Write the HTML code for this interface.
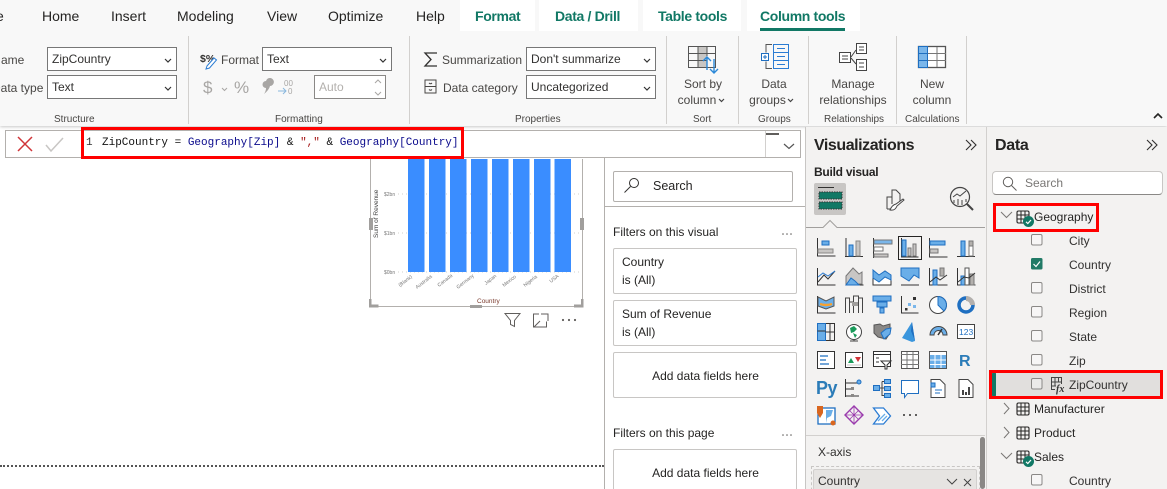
<!DOCTYPE html>
<html><head><meta charset="utf-8"><style>
*{box-sizing:border-box}
html{margin:0;padding:0;width:1167px;height:489px;overflow:hidden}
body{margin:0;padding:0;width:1167px;height:489px;position:relative;overflow:hidden;background:#fff;font-family:"Liberation Sans",sans-serif;color:#252423}
.t{position:absolute;white-space:nowrap;font-size:12px;line-height:16px}
.b{position:absolute}
.tab{font-size:14px;top:8px;line-height:17px;color:#252423}
.tg{font-size:14px;top:8px;line-height:17px;color:#117865;font-weight:bold;letter-spacing:-.35px}
.inp{position:absolute;background:#fff;border:1px solid #777;height:24px;font-size:12px;line-height:23px;padding-left:4px;white-space:nowrap;color:#323130}
.gl{position:absolute;top:113px;font-size:10px;line-height:13px;color:#484644;white-space:nowrap;text-align:center}
.sep{position:absolute;top:36px;height:88px;width:1px;background:#d2d0ce}
.rt{position:absolute;font-size:12px;line-height:16px;color:#484644;text-align:center;white-space:nowrap}
.card{position:absolute;left:613px;width:184px;height:46px;border:1px solid #c8c6c4;border-radius:2px;background:#fff;font-size:12px;line-height:18px;padding:4px 8px}
.add{text-align:center;line-height:46px;padding:0;padding-left:1px}
.f{position:absolute;left:1069px;font-size:12px;line-height:16px;color:#323130;white-space:nowrap}
.g{position:absolute;left:1034px;font-size:12px;line-height:16px;color:#252423;white-space:nowrap}
.red{position:absolute;border:3px solid #f00}
</style></head><body>

<!-- ribbon -->
<div class="b" style="left:0;top:0;width:1167px;height:126px;background:#f8f8f8;box-shadow:0 1px 3px rgba(0,0,0,.22)"></div>
<div class="b" style="left:460px;top:0;width:75px;height:31px;background:#fff"></div>
<div class="b" style="left:539px;top:0;width:99px;height:31px;background:#fff"></div>
<div class="b" style="left:643px;top:0;width:98px;height:31px;background:#fff"></div>
<div class="b" style="left:747px;top:0;width:113px;height:31px;background:#fff"></div>
<div class="b" style="left:760px;top:28px;width:85px;height:3px;background:#117865"></div>
<span class="t tab" style="left:-4px;top:8px">e</span>
<span class="t tab" style="left:42px">Home</span>
<span class="t tab" style="left:111px">Insert</span>
<span class="t tab" style="left:177px">Modeling</span>
<span class="t tab" style="left:267px">View</span>
<span class="t tab" style="left:328px">Optimize</span>
<span class="t tab" style="left:416px">Help</span>
<span class="t tg" style="left:475px">Format</span>
<span class="t tg" style="left:555px">Data / Drill</span>
<span class="t tg" style="left:658px">Table tools</span>
<span class="t tg" style="left:760px">Column tools</span>

<div class="sep" style="left:188px"></div><div class="sep" style="left:409px"></div><div class="sep" style="left:666px"></div><div class="sep" style="left:738px"></div><div class="sep" style="left:808px"></div><div class="sep" style="left:896px"></div><div class="sep" style="left:966px"></div>

<span class="t" style="left:1px;top:52px;color:#484644">ame</span>
<span class="t" style="left:-8px;top:80px;color:#484644">Data type</span>
<div class="inp" style="left:47px;top:47px;width:130px">ZipCountry</div>
<div class="inp" style="left:47px;top:75px;width:130px">Text</div>
<span class="t" style="left:221px;top:52px;color:#484644">Format</span>
<div class="inp" style="left:262px;top:47px;width:130px">Text</div>
<div class="inp" style="left:314px;top:75px;width:72px;color:#b3b0ad;border-color:#8a8886">Auto</div>
<span class="t" style="left:442px;top:52px;color:#484644">Summarization</span>
<span class="t" style="left:443px;top:80px;color:#484644">Data category</span>
<div class="inp" style="left:526px;top:47px;width:130px">Don't summarize</div>
<div class="inp" style="left:526px;top:75px;width:130px">Uncategorized</div>
<div class="rt" style="left:679px;top:76px;width:48px">Sort by</div>
<div class="rt" style="left:672px;top:92px;width:50px">column</div>
<div class="rt" style="left:750px;top:76px;width:48px">Data</div>
<div class="rt" style="left:749px;top:92px;width:37px">groups</div>
<div class="rt" style="left:823px;top:76px;width:60px">Manage</div>
<div class="rt" style="left:815px;top:92px;width:76px">relationships</div>
<div class="rt" style="left:912px;top:76px;width:40px">New</div>
<div class="rt" style="left:911px;top:92px;width:42px">column</div>
<div class="gl" style="left:54px">Structure</div>
<div class="gl" style="left:275px">Formatting</div>
<div class="gl" style="left:515px">Properties</div>
<div class="gl" style="left:693px">Sort</div>
<div class="gl" style="left:758px">Groups</div>
<div class="gl" style="left:824px">Relationships</div>
<div class="gl" style="left:905px">Calculations</div>

<!-- formula bar -->
<div class="b" style="left:5px;top:130px;width:796px;height:28px;border:1px solid #b3b0ad;background:#fff"></div>
<div class="b" style="left:765px;top:131px;width:1px;height:26px;background:#d2d0ce"></div>
<div class="b" style="left:766px;top:133px;width:13px;height:2px;background:#605e5c"></div>
<div class="t" style="left:86px;top:136px;font:11px/15px 'Liberation Mono',monospace;color:#333">1</div>
<div class="t" style="left:102px;top:136px;font:11px/15px 'Liberation Mono',monospace;color:#111;white-space:pre">ZipCountry = <span style="color:#0a0a8c">Geography[Zip]</span> &amp; <span style="color:#a31515">","</span> &amp; <span style="color:#0a0a8c">Geography[Country]</span></div>

<!-- canvas -->
<div class="b" style="left:604px;top:158px;width:1px;height:331px;background:#b3b0ad"></div>
<div class="b" style="left:0;top:465px;width:604px;height:0;border-top:2px dotted #555"></div>

<!-- chart and all vector icons -->
<svg class="b" style="left:0;top:0" width="1167" height="489" viewBox="0 0 1167 489" fill="none">
<text x="200" y="62" font-family="Liberation Sans" font-size="10.500" font-weight="bold" fill="#323130">$%</text>
<path d="M207 66l7-8 2.500 2-7 8-3.500 1z" fill="#fff" stroke="#2b7cd3"/>
<path d="M165 59l3 3 3-3M165 87l3 3 3-3M380 59l3 3 3-3M644 59l3 3 3-3M644 87l3 3 3-3" stroke="#333" stroke-width="1.200"/>
<text x="203" y="93" font-family="Liberation Sans" font-size="17" fill="#a8a6a4">$</text>
<path d="M222 88l2.500 2.500 2.500-2.500" stroke="#a8a6a4"/>
<text x="234" y="93" font-family="Liberation Sans" font-size="17" fill="#a8a6a4">%</text>
<path d="M266 81a4 4 0 1 1 4 5q-1 4-6 8q2-3 2-6a3.500 3.500 0 0 1 0-7z" fill="#a8a6a4"/>
<text x="284" y="86" font-family="Liberation Sans" font-size="8" fill="#a8a6a4">00</text>
<text x="288" y="94" font-family="Liberation Sans" font-size="8" fill="#a8a6a4">0</text>
<path d="M278 91h8M283 88l3 3-3 3" stroke="#8ab8de"/>
<path d="M375 83l3-3 3 3M375 92l3 3 3-3" stroke="#a8a6a4"/>
<path d="M437 53h-12l6 6.500-6 6.500h12" stroke="#323130" stroke-width="1.300"/>
<path d="M425 80h11v13h-11zM425 86.500h11M429 83q1.500 1.500 3 0M429 89.500q1.500 1.500 3 0" stroke="#484644"/>
<!-- sort by column -->
<rect x="698" y="46" width="9" height="22" fill="#c8c6c4"/>
<path d="M688.500 46.500h27v21h-27z" stroke="#555"/>
<path d="M688.500 53.500h27M688.500 60.500h18M698 46v22M707 46v10" stroke="#555"/>
<path d="M707 57v13M703 61l4-4 4 4" stroke="#2b88d8" stroke-width="1.400"/><path d="M714 59v14M710 69l4 4 4-4" stroke="#2b88d8" stroke-width="1.400"/>
<path d="M719 99l2.500 2.500 2.500-2.500M788 99l2.500 2.500 2.500-2.500" stroke="#444" stroke-width="1.200"/>
<!-- data groups -->
<path d="M772 44.500h-6v8M772 68.500h-6v-7" stroke="#555"/><rect x="773.500" y="44.500" width="15" height="24" stroke="#2b7cd3"/>
<path d="M773.500 52.500h15M773.500 60.500h15M777 48.500h8M777 56.500h8M777 64.500h8" stroke="#2b7cd3"/>
<rect x="761.500" y="53.500" width="7" height="7" fill="#fff" stroke="#1f6fc1"/><path d="M763 57h4M765 55v4" stroke="#1f6fc1"/>
<!-- manage relationships -->
<rect x="839.500" y="52.500" width="11" height="10" fill="#fff" stroke="#444"/><rect x="856.500" y="43.500" width="10" height="10" fill="#fff" stroke="#444"/><rect x="856.500" y="59.500" width="10" height="11" fill="#fff" stroke="#444"/>
<path d="M842 56h6M842 59h6M859 47h5M859 50h5M859 63h5M859 67h5M851 57l5-7M851 58l5 6" stroke="#444"/>
<!-- new column -->
<rect x="918.500" y="46.500" width="27" height="21" fill="#fff" stroke="#555" stroke-width="1.300"/><rect x="918.500" y="46.500" width="9" height="21" fill="#7ab6ea" stroke="#1f6fc1"/>
<path d="M928 53.500h18M928 60.500h18M937 47v20" stroke="#777"/><path d="M919 53.500h9M919 60.500h9" stroke="#1f6fc1"/>
<path d="M1154 118l4-4 4 4" stroke="#252423" stroke-width="1.600"/>
<!-- formula icons -->
<path d="M18 137l14 14M32 137l-14 14" stroke="#d13438" stroke-width="1.500"/>
<path d="M46 145l5 6 12-13" stroke="#c8c6c4" stroke-width="1.500"/>
<path d="M784 144l5 4.500 5-4.500" stroke="#555" stroke-width="1.200"/>
<!-- chart -->
<path d="M370.500 159v147.500h212V159" stroke="#b3b0ad"/>
<g stroke="#d2d0ce" stroke-dasharray="1 3"><path d="M398 194h182M398 233h182M398 272h182"/></g>
<g fill="#3a8dff"><rect x="408" y="159" width="16.500" height="113"/><rect x="429" y="159" width="16.500" height="113"/><rect x="450" y="159" width="16.500" height="113"/><rect x="471" y="159" width="16.500" height="113"/><rect x="492" y="159" width="16.500" height="113"/><rect x="513" y="159" width="16.500" height="113"/><rect x="534" y="159" width="16.500" height="113"/><rect x="554.500" y="159" width="16.500" height="113"/></g>
<g font-family="Liberation Sans" font-size="5" fill="#777"><text x="384" y="196">$2bn</text><text x="384" y="235">$1bn</text><text x="384" y="274">$0bn</text>
<text transform="translate(400,287) rotate(-38)">(Blank)</text><text transform="translate(417,289) rotate(-38)">Australia</text><text transform="translate(439,287) rotate(-38)">Canada</text><text transform="translate(458,289) rotate(-38)">Germany</text><text transform="translate(486,285) rotate(-38)">Japan</text><text transform="translate(504,287) rotate(-38)">Mexico</text><text transform="translate(525,287) rotate(-38)">Nigeria</text><text transform="translate(551,283) rotate(-38)">USA</text></g>
<text transform="translate(378,238) rotate(-90)" font-family="Liberation Sans" font-size="6.500" fill="#444">Sum of Revenue</text>
<text x="477" y="303" font-family="Liberation Sans" font-size="6.500" fill="#7a3b2e">Country</text>
<g fill="#a19f9d"><rect x="369" y="218" width="4" height="12"/><rect x="580" y="218" width="4" height="12"/><rect x="470" y="305" width="12" height="3"/><path d="M369 299h2.500v5.500h7v3h-9.500zM583.500 299h-2.500v5.500h-7v3h9.500z"/></g>
<path d="M505 313.500h15l-5.500 7v6l-4-2v-4z" stroke="#605e5c"/>
<path d="M539 314h-5.500v13h13v-5.500M534 327l6-6M541 314h7v7" stroke="#605e5c"/>
<g fill="#605e5c"><circle cx="563" cy="320" r="1.100"/><circle cx="569" cy="320" r="1.100"/><circle cx="575" cy="320" r="1.100"/></g>
<!-- filter search -->
<circle cx="634" cy="183" r="4.500" stroke="#323130"/><path d="M630.500 186.500l-6 6" stroke="#323130"/>
<g fill="#605e5c"><circle cx="783" cy="234" r=".8"/><circle cx="787" cy="234" r=".8"/><circle cx="791" cy="234" r=".8"/><circle cx="783" cy="435" r=".8"/><circle cx="787" cy="435" r=".8"/><circle cx="791" cy="435" r=".8"/></g>
</svg>

<!-- filter pane -->
<div class="b" style="left:605px;top:206px;width:200px;height:1px;background:#b3b0ad"></div>
<div class="b" style="left:613px;top:171px;width:180px;height:31px;border:1px solid #b3b0ad;border-radius:2px"></div>
<span class="t" style="left:653px;top:178px;font-size:12.500px">Search</span>
<span class="t" style="left:613px;top:224px">Filters on this visual</span>
<div class="card" style="top:248px">Country<br>is (All)</div>
<div class="card" style="top:300px">Sum of Revenue<br>is (All)</div>
<div class="card add" style="top:352px">Add data fields here</div>
<span class="t" style="left:613px;top:425px">Filters on this page</span>
<div class="card add" style="top:449px;height:60px">Add data fields here</div>

<!-- right panels -->
<div class="b" style="left:805px;top:127px;width:362px;height:362px;background:#f3f2f1"></div>
<div class="b" style="left:805px;top:127px;width:1px;height:362px;background:#c8c6c4"></div>
<div class="b" style="left:986px;top:127px;width:1px;height:362px;background:#d2d0ce"></div>
<span class="t" style="left:814px;top:136px;font-size:16px;line-height:20px;font-weight:bold;letter-spacing:-.45px;color:#252423">Visualizations</span>
<span class="t" style="left:995px;top:136px;font-size:16px;line-height:20px;font-weight:bold;letter-spacing:-.3px;color:#252423">Data</span>
<span class="t" style="left:814px;top:164px;font-weight:bold;letter-spacing:-.25px">Build visual</span>
<div class="b" style="left:814px;top:183px;width:32px;height:32px;background:#c8c6c4;border-radius:2px"></div>
<div class="b" style="left:806px;top:435px;width:179px;height:1px;background:#d2d0ce"></div>
<span class="t" style="left:818px;top:444px;color:#323130">X-axis</span>
<div class="b" style="left:811px;top:466px;width:169px;height:30px;border:1px dashed #c8c6c4"></div>
<div class="b" style="left:813px;top:469px;width:164px;height:24px;background:#e6e4e2;border:1px solid #d2d0ce;border-radius:2px"></div>
<span class="t" style="left:818px;top:473px;color:#323130">Country</span>
<div class="b" style="left:980px;top:437px;width:5px;height:52px;background:#8a8886;border-radius:3px"></div>

<div class="b" style="left:992px;top:171px;width:171px;height:24px;background:#fff;border:1px solid #c8c6c4;border-bottom-color:#8a8886;border-radius:4px"></div>
<span class="t" style="left:1025px;top:175px;color:#797775">Search</span>

<span class="g" style="top:209px">Geography</span>
<span class="f" style="top:233px">City</span>
<span class="f" style="top:257px">Country</span>
<span class="f" style="top:281px">District</span>
<span class="f" style="top:305px">Region</span>
<span class="f" style="top:329px">State</span>
<span class="f" style="top:353px">Zip</span>
<div class="b" style="left:992px;top:373px;width:171px;height:24px;background:#e1dfdd"></div>
<div class="b" style="left:992px;top:372px;width:4px;height:25px;background:#117865;border-radius:2px"></div>
<span class="f" style="top:377px">ZipCountry</span>
<span class="g" style="top:401px">Manufacturer</span>
<span class="g" style="top:425px">Product</span>
<span class="g" style="top:449px">Sales</span>
<span class="f" style="top:473px">Country</span>

<!-- panel icons -->
<svg class="b" style="left:0;top:0" width="1167" height="489" viewBox="0 0 1167 489" fill="none">
<defs>
<g id="cb"><rect x=".5" y=".5" width="10.500" height="10.500" rx="1.500" fill="#fff" fill-opacity=".35" stroke="#8a8886"/></g>
<g id="tb"><rect x=".5" y=".5" width="12" height="12" rx="1.500" stroke="#252423" stroke-width="1.100"/><path d="M.5 4.500h12M.5 8.500h12M4.500 .5v12M8.500 .5v12" stroke="#252423"/></g>
<g id="ok"><circle cx="5.500" cy="5.500" r="5.500" fill="#117865"/><path d="M3 5.800l1.800 1.700 3.200-3.500" stroke="#fff" stroke-width="1.200"/></g>
</defs>
<path d="M966 140l5 5-5 5M971 140l5 5-5 5M1147 140l5 5-5 5M1152 140l5 5-5 5" stroke="#323130" stroke-width="1.100"/>
<!-- build visual tabs -->
<path d="M818 187.500h16" stroke="#323130"/>
<rect x="819" y="192" width="23" height="7" fill="#117865" stroke="#333" stroke-dasharray="1.500 1"/><rect x="819" y="202" width="23" height="7" fill="#117865" stroke="#333" stroke-dasharray="1.500 1"/>
<path d="M887 209v-12h5v-7h4l4 4v7M887 209h6M892 190v14" stroke="#444"/><path d="M890 210q5 1 7-4l7-6-1-1-7 5q-4 1-6 6z" fill="#fff" stroke="#444"/>
<circle cx="960" cy="197" r="9.500" stroke="#444" stroke-width="1.200"/><path d="M953 197l4-3 3 2 6-5M954 203v-3M958 205v-6M962 205v-5M966 202v-3" stroke="#444"/><path d="M967 204l6 6" stroke="#444" stroke-width="2"/>
<path d="M806 227.500h17l7-7 7 7h148" stroke="#a19f9d" fill="#f3f2f1"/>
<rect x="898.500" y="236.500" width="23" height="23" stroke="#252423"/>
<!-- row 1 -->
<g stroke="#333">
<path d="M817.500 238v18h18"/><rect x="822" y="241" width="7" height="4" fill="#6aaee8" stroke="#1f6fc1"/><rect x="818" y="249" width="15" height="4" fill="#c8c6c4" stroke="#8a8886"/>
<path d="M845 256.500h18M846 238v18"/><rect x="849" y="245" width="4" height="11" fill="#6aaee8" stroke="#1f6fc1"/><rect x="856" y="241" width="4" height="15" fill="#c8c6c4" stroke="#8a8886"/>
<path d="M873.500 238v20"/><rect x="874" y="240" width="18" height="4" fill="#7ab6ea" stroke="#777"/><rect x="874" y="247" width="9" height="4" fill="#fff" stroke="#777"/><rect x="874" y="254" width="14" height="3" fill="#c8c6c4" stroke="#777"/>
<path d="M901.500 238v19h17"/><rect x="902" y="240" width="4" height="16" fill="#6aaee8" stroke="#1f6fc1"/><rect x="908" y="248" width="3" height="8" fill="#c8c6c4" stroke="#777"/><rect x="913" y="244" width="3" height="12" fill="#c8c6c4" stroke="#777"/>
<path d="M929.500 238v19h18"/><rect x="930" y="241" width="15" height="4" fill="#6aaee8" stroke="#1f6fc1"/><rect x="930" y="249" width="8" height="4" fill="#c8c6c4" stroke="#777"/>
<path d="M957 256.500h18"/><rect x="961" y="241" width="4" height="15" fill="#6aaee8" stroke="#1f6fc1"/><rect x="969" y="241" width="4" height="15" fill="#fff" stroke="#777"/><rect x="969" y="241" width="4" height="5" fill="#b3b0ad" stroke="#777"/>
</g>
<!-- row 2 -->
<g stroke="#333">
<path d="M817.500 268v17h18M818 282l6-7 4 4 7-8" /><path d="M818 277l5-4 5 3 7-5" stroke="#2b7cd3"/>
<path d="M845.500 285h18"/><path d="M846 276l7-8 6 6 3-2v12h-16z" fill="#c8c6c4" stroke="#777"/><path d="M846 285l5-7 4 3 4 4z" fill="#6aaee8" stroke="#1f6fc1"/>
<path d="M873.500 285h18"/><path d="M873 271l6 5 6-5 6 5v9h-18z" fill="#fff"/><path d="M873 270l6 5 6-4 6 4v5l-6-3-6 5-6-4z" fill="#6aaee8" stroke="#1f6fc1"/>
<path d="M901.500 268h18"/><path d="M901 268h18v10l-5-3-5 6-8-5z" fill="#6aaee8" stroke="#1f6fc1"/><path d="M901 285h18"/>
<path d="M929.500 268v17h18"/><rect x="933" y="270" width="4" height="15" fill="#6aaee8" stroke="#1f6fc1"/><rect x="940" y="268" width="4" height="8" fill="#b3b0ad" stroke="#777"/><path d="M930 282l6-5 4 3 7-5"/>
<path d="M957.500 268v17h18"/><rect x="961" y="276" width="4" height="9" fill="#6aaee8" stroke="#1f6fc1"/><rect x="965" y="268" width="4" height="17" fill="#fff" stroke="#555"/><rect x="970" y="274" width="4" height="11" fill="#b3b0ad" stroke="#777"/><path d="M958 282l6-5 5 1 6-5"/>
</g>
<!-- row 3 -->
<g stroke="#333">
<path d="M817.500 296v17h18"/><path d="M818 297l8 4 8-4v9l-8 3-8-3z" fill="#6aaee8" stroke="#555"/><path d="M820 304q6 2 12 0" stroke="#f7a12f" stroke-width="2.500"/>
<path d="M845.500 313v-15h4v15M849.500 313v-11h4v11M853.500 313v-17h5v17M858.500 313v-15h4v15" stroke="#444"/><rect x="852" y="302" width="6" height="4" fill="#a19f9d" stroke="none"/>
<path d="M873 296h18v5h-18zM877 302h10v5h-10zM880 308h4v5h-4z" fill="#6aaee8" stroke="#1f6fc1"/>
<path d="M901.500 296v17h17" /><rect x="913" y="297" width="3" height="3" fill="#333" stroke="none"/><rect x="908" y="303" width="3" height="3" fill="#7ab6ea" stroke="none"/><rect x="913" y="305" width="3" height="3" fill="#7ab6ea" stroke="none"/><rect x="905" y="308" width="2.500" height="2.500" fill="#333" stroke="none"/>
<circle cx="938" cy="305" r="8.500" fill="#fff" stroke="#444"/><path d="M938 296.500a8.500 8.500 0 0 1 6 14.500l-6-6z" fill="#6aaee8" stroke="#1f6fc1"/>
<circle cx="966" cy="305" r="7" stroke="#1f6fc1" stroke-width="3.500"/><path d="M966 296a9 9 0 0 1 9 9h-5a4 4 0 0 0-4-4z" fill="#b3b0ad" stroke="none"/>
</g>
<!-- row 4 -->
<g stroke="#333">
<rect x="817.500" y="323.500" width="17" height="17"/><rect x="817.500" y="323.500" width="8" height="17" fill="#6aaee8" stroke="#1f6fc1"/><path d="M817.500 331h8M825.500 332h9M830 332v8M830 324v8"/>
<circle cx="854" cy="332" r="7.500" fill="#fff" stroke="#444"/><path d="M850 328l4-2 3 3-3 3-3 1zM853 333l4 2-2 3z" fill="#1a9a5a" stroke="none"/><path d="M850 341h8M854 340v1" stroke="#444"/>
<path d="M874 325l6-1 3 2 7-2v9l-4 6-8-2-4-4z" fill="#8a8886" stroke="#555"/><path d="M881 333l5-4 5-1-1 6-6 5z" fill="#6aaee8" stroke="#1f6fc1"/>
<path d="M912 322l-10 16 10 4 3-1z" fill="#3a96dd" stroke="none"/><path d="M912 322l3 19-4-10z" fill="#1f6fc1" stroke="none"/>
<path d="M930 335a8.500 8.500 0 0 1 17 0h-4a4.500 4.500 0 0 0-9 0z" fill="#6aaee8" stroke="#444"/><path d="M938 335l4-6" stroke="#333" stroke-width="1.500"/>
<rect x="957.500" y="324.500" width="17" height="14" fill="#fff" stroke="#444"/><text x="959" y="335" font-family="Liberation Sans" font-size="8.500" fill="#1f6fc1" stroke="none">123</text>
</g>
<!-- row 5 -->
<g stroke="#333">
<rect x="817.500" y="351.500" width="17" height="17" fill="#fff"/><path d="M820 356h8M820 360h6M820 364h9" stroke="#1f6fc1" stroke-width="1.200"/>
<rect x="845.500" y="352.500" width="17" height="15" fill="#fff"/><path d="M848 363l3-5 3 5z" fill="#1a9a5a" stroke="none"/><path d="M855 357h6l-3 5z" fill="#d13438" stroke="none"/><path d="M847 365h14" stroke="#c8c6c4"/>
<rect x="873.500" y="351.500" width="17" height="15" fill="#fff"/><path d="M873.500 354.500h17M876 358h3M876 362h3"/><path d="M881 361h10l-4 4v4h-2v-4z" fill="#fff"/>
<rect x="901.500" y="351.500" width="17" height="17" fill="#fff" stroke="#555"/><path d="M901 354.500h18M901 360h18M901 364.500h18M907 352v16M913 352v16" stroke="#777"/>
<rect x="929.500" y="351.500" width="17" height="17" fill="#fff" stroke="#555"/><rect x="930" y="355" width="16" height="13" fill="#6aaee8" stroke="none"/><path d="M930 360h16M930 364.500h16M935 355v13M941 355v13" stroke="#fff"/>
</g>
<text x="959" y="366" font-family="Liberation Sans" font-size="16" font-weight="bold" fill="#2b7cb8">R</text>
<!-- row 6 -->
<text x="816" y="394" font-family="Liberation Sans" font-size="18" font-weight="bold" letter-spacing="-.5" fill="#2b7cb8">Py</text>
<g stroke="#333">
<path d="M845.500 379v18M846 383h13M846 389h8M846 396h13"/><circle cx="859" cy="382" r="2" fill="#6aaee8" stroke="#1f6fc1"/><rect x="851" y="387" width="3" height="3" fill="#8a8886" stroke="none"/><rect x="851" y="394" width="3" height="3" fill="#8a8886" stroke="none"/>
<rect x="873.500" y="385.500" width="6" height="5" fill="#6aaee8" stroke="#1f6fc1"/><rect x="884.500" y="379.500" width="6" height="4" fill="#6aaee8" stroke="#1f6fc1"/><rect x="884.500" y="386.500" width="6" height="4" fill="#6aaee8" stroke="#1f6fc1"/><rect x="884.500" y="393.500" width="6" height="4" fill="#6aaee8" stroke="#1f6fc1"/><path d="M880 388h4M882 381.500v14h2M882 381.500h2" stroke="#444"/>
<path d="M901.500 380.500h17v13h-11l-3 4v-4h-3z" fill="#fff" stroke="#1f6fc1"/>
<path d="M931 379.500h9l5 5v13h-14z" fill="#fff" stroke="#444"/><rect x="931" y="383" width="4" height="4" fill="#6aaee8" stroke="#1f6fc1"/><path d="M935 390h7M935 393h5" stroke="#1f6fc1"/>
<path d="M959 379.500h9l5 5v13h-14z" fill="#fff" stroke="#444"/><rect x="962" y="390" width="2" height="5" fill="#444" stroke="none"/><rect x="965" y="392" width="2" height="3" fill="#444" stroke="none"/><rect x="968" y="387" width="2" height="8" fill="#444" stroke="none"/>
</g>
<!-- row 7 -->
<rect x="818" y="408" width="17" height="16" fill="#fff" stroke="#1f6fc1" stroke-width="1.300"/><path d="M826 410h7l-2 6-4 2-1 5z" fill="#6aaee8"/><path d="M817 406h6v7l-3 5-3-5z" fill="#d9661f"/><circle cx="833" cy="423" r="2.500" fill="#d9661f"/>
<path d="M854 406l9 9-9 9-9-9z" stroke="#9a3bad" stroke-width="1.400"/><path d="M854 406v18M845 415h18M849.500 410.500l9 9M858.500 410.500l-9 9" stroke="#9a3bad" stroke-width=".8"/>
<path d="M873.500 408h10l7 8-7 8h-10l6-8z" fill="#fff" stroke="#2b7cd3" stroke-width="1.300"/><path d="M878 421l7-7M882 421l5-5" stroke="#6aaee8" stroke-width="1.300"/>
<g fill="#323130"><circle cx="904" cy="415" r="1"/><circle cx="910" cy="415" r="1"/><circle cx="916" cy="415" r="1"/></g>
<!-- field well -->
<path d="M947 479l5 5 5-5M964 479l7 7M971 479l-7 7" stroke="#444"/>
<!-- data search -->
<circle cx="1008" cy="182" r="4.700" stroke="#605e5c"/><path d="M1011.500 185.500l5 5" stroke="#605e5c"/>
<!-- tree -->
<path d="M1001 212l5.500 5.500 5.500-5.500M1001 453l5.500 5.500 5.500-5.500M1004 403l5 5.500-5 5.500M1004 427l5 5.500-5 5.500" stroke="#797775"/>
<use href="#tb" x="1016.500" y="210.500"/><use href="#ok" x="1023" y="216"/>
<use href="#tb" x="1016.500" y="402.500"/><use href="#tb" x="1016.500" y="426.500"/><use href="#tb" x="1016.500" y="450.500"/><use href="#ok" x="1023" y="456"/>
<use href="#cb" x="1031" y="234"/><use href="#cb" x="1031" y="282"/><use href="#cb" x="1031" y="306"/><use href="#cb" x="1031" y="330"/><use href="#cb" x="1031" y="354"/><use href="#cb" x="1031" y="378"/><use href="#cb" x="1031" y="474"/>
<rect x="1031" y="258" width="11.500" height="11.500" rx="1.500" fill="#217a66"/><path d="M1033.500 264l2.500 2.500 4-5" stroke="#fff" stroke-width="1.200"/>
<path d="M1061.500 384v-6.500h-10v12h3.500M1055 378v8M1058.500 378v4M1052 382h9M1052 386h4" stroke="#444"/><text x="1056" y="392" font-family="Liberation Serif" font-style="italic" font-weight="bold" font-size="10" fill="#333">fx</text>
</svg>

<div class="red" style="left:81px;top:127px;width:383px;height:32px"></div>
<div class="red" style="left:993px;top:203px;width:106px;height:29px"></div>
<div class="red" style="left:989px;top:370px;width:174px;height:29px"></div>
</body></html>
